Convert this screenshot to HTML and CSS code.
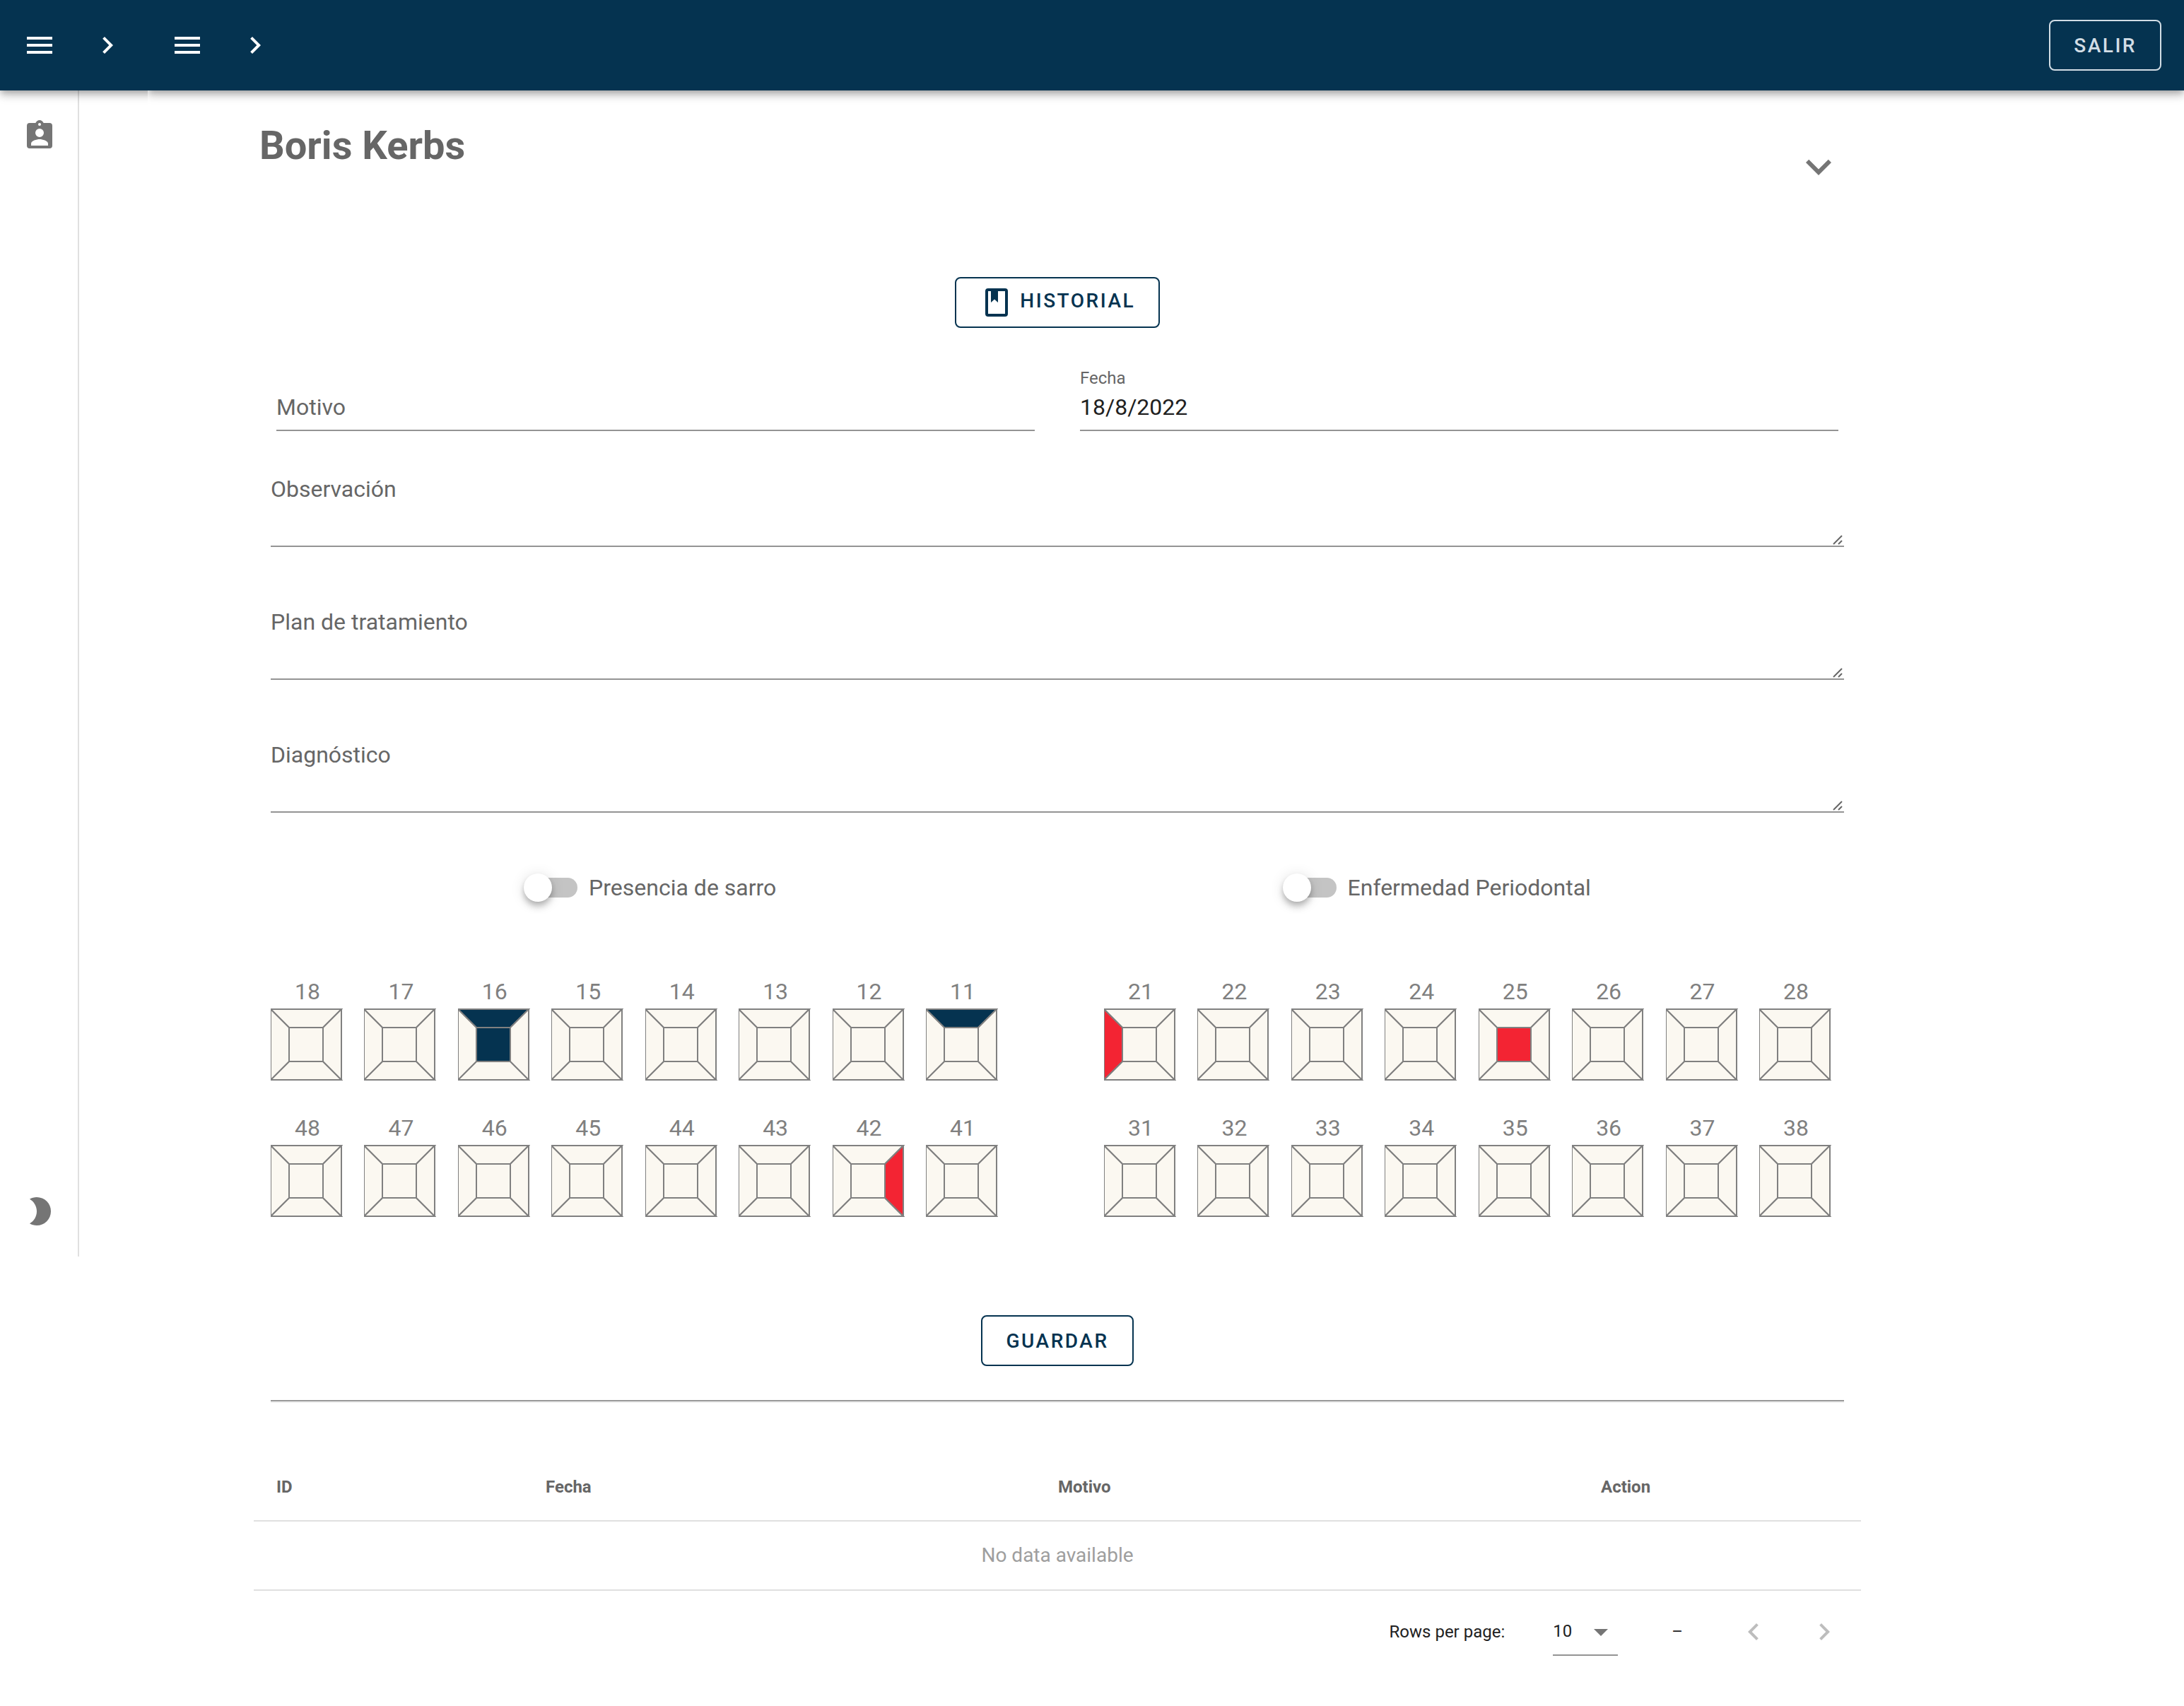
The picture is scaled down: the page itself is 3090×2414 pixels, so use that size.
FILE: index.html
```html
<!DOCTYPE html>
<html lang="es">
<head>
<meta charset="utf-8">
<meta name="viewport" content="width=device-width, initial-scale=1">
<title>Boris Kerbs</title>
<link rel="stylesheet" href="styles.css">
</head>
<body>
<svg class="sprite" width="0" height="0" aria-hidden="true">
  <symbol id="menu" viewBox="0 0 24 24"><path d="M3 6h18v2H3V6m0 5h18v2H3v-2m0 5h18v2H3v-2z"/></symbol>
  <symbol id="chevron-right" viewBox="0 0 24 24"><path d="M8.59 16.58L13.17 12 8.59 7.41 10 6l6 6-6 6-1.41-1.42z"/></symbol>
  <symbol id="chevron-left" viewBox="0 0 24 24"><path d="M15.41 16.58L10.83 12l4.58-4.59L14 6l-6 6 6 6 1.41-1.42z"/></symbol>
  <symbol id="chevron-down" viewBox="0 0 24 24"><path d="M7.41 8.58L12 13.17l4.59-4.59L18 10l-6 6-6-6 1.41-1.42z"/></symbol>
  <symbol id="grip" viewBox="0 0 14 14"><path d="M1 13L13 1M8 13l5-5" fill="none" stroke="#666" stroke-width="2"/></symbol>
  <symbol id="tooth" viewBox="0 -1 102 102">
    <g stroke="#808080" stroke-width="2">
      <polygon class="face-top" points="0,0 100,0 74,26 26,26"/>
      <polygon class="face-bottom" points="26,74 74,74 100,100 0,100"/>
      <polygon class="face-right" points="74,26 100,0 100,100 74,74"/>
      <polygon class="face-left" points="0,0 26,26 26,74 0,100"/>
      <polygon class="face-center" points="26,26 74,26 74,74 26,74"/>
    </g>
  </symbol>
</svg>

<header class="topbar">
  <div class="bar bar-outer">
    <button class="icon-button" type="button" aria-label="Menú principal"><svg class="icon"><use href="#menu"/></svg></button>
    <button class="icon-button" type="button" aria-label="Expandir menú"><svg class="icon"><use href="#chevron-right"/></svg></button>
  </div>
  <div class="bar bar-inner">
    <button class="icon-button" type="button" aria-label="Menú"><svg class="icon"><use href="#menu"/></svg></button>
    <button class="icon-button" type="button" aria-label="Expandir"><svg class="icon"><use href="#chevron-right"/></svg></button>
    <button class="button button-light" type="button">SALIR</button>
  </div>
</header>

<div class="shell">
  <nav class="sidebar" aria-label="Secciones">
    <a class="icon-button" href="#paciente" aria-label="Pacientes"><svg class="icon" viewBox="0 0 24 24"><path d="M18 19H6v-1.4c0-2 4-3.1 6-3.1s6 1.1 6 3.1V19M12 7a3 3 0 1 1 0 6 3 3 0 0 1 0-6m0-4a1 1 0 1 1 0 2 1 1 0 0 1 0-2m7 0h-4.18C14.4 1.84 13.3 1 12 1s-2.4.84-2.82 2H5a2 2 0 0 0-2 2v14a2 2 0 0 0 2 2h14a2 2 0 0 0 2-2V5a2 2 0 0 0-2-2z" fill-rule="evenodd"/></svg></a>
    <button class="icon-button" type="button" aria-label="Modo oscuro"><svg class="icon" viewBox="0 0 24 24"><path d="M10 2c-1.82 0-3.53.5-5 1.35C8 5.08 10 8.3 10 12s-2 6.92-5 8.65C6.47 21.5 8.18 22 10 22a10 10 0 0 0 0-20z"/></svg></button>
  </nav>

  <main class="content" id="paciente">
    <div class="patient">
      <h1 class="patient-name">Boris Kerbs</h1>
      <button class="icon-button" type="button" aria-label="Mostrar datos"><svg class="icon icon-large"><use href="#chevron-down"/></svg></button>
    </div>

    <button class="button history" type="button"><svg class="icon" viewBox="0 0 24 24"><path d="M18 2a2 2 0 0 1 2 2v16a2 2 0 0 1-2 2H6a2 2 0 0 1-2-2V4a2 2 0 0 1 2-2h12m0 2h-5v8l-2.5-2.25L8 12V4H6v16h12V4z"/></svg> HISTORIAL</button>

    <form class="form">
      <div class="field-row">
        <div class="field field-empty">
          <label for="motivo">Motivo</label>
          <input id="motivo" type="text">
        </div>
        <div class="field">
          <label for="fecha">Fecha</label>
          <input id="fecha" type="text" value="18/8/2022">
        </div>
      </div>

      <div class="areas">
        <div class="area"><label for="observacion">Observación</label><textarea id="observacion"></textarea><svg class="grip"><use href="#grip"/></svg></div>
        <div class="area"><label for="plan">Plan de tratamiento</label><textarea id="plan"></textarea><svg class="grip"><use href="#grip"/></svg></div>
        <div class="area"><label for="diagnostico">Diagnóstico</label><textarea id="diagnostico"></textarea><svg class="grip"><use href="#grip"/></svg></div>
      </div>

      <div class="switches">
        <label class="switch"><input type="checkbox">Presencia de sarro</label>
        <label class="switch"><input type="checkbox">Enfermedad Periodontal</label>
      </div>

      <div class="odontogram">
        <div class="quadrant">
          <div class="tooth"><span>18</span><svg><use href="#tooth"/></svg></div>
          <div class="tooth"><span>17</span><svg><use href="#tooth"/></svg></div>
          <div class="tooth done-top done-center"><span>16</span><svg><use href="#tooth"/></svg></div>
          <div class="tooth"><span>15</span><svg><use href="#tooth"/></svg></div>
          <div class="tooth"><span>14</span><svg><use href="#tooth"/></svg></div>
          <div class="tooth"><span>13</span><svg><use href="#tooth"/></svg></div>
          <div class="tooth"><span>12</span><svg><use href="#tooth"/></svg></div>
          <div class="tooth done-top"><span>11</span><svg><use href="#tooth"/></svg></div>
        </div>
        <div class="quadrant">
          <div class="tooth todo-left"><span>21</span><svg><use href="#tooth"/></svg></div>
          <div class="tooth"><span>22</span><svg><use href="#tooth"/></svg></div>
          <div class="tooth"><span>23</span><svg><use href="#tooth"/></svg></div>
          <div class="tooth"><span>24</span><svg><use href="#tooth"/></svg></div>
          <div class="tooth todo-center"><span>25</span><svg><use href="#tooth"/></svg></div>
          <div class="tooth"><span>26</span><svg><use href="#tooth"/></svg></div>
          <div class="tooth"><span>27</span><svg><use href="#tooth"/></svg></div>
          <div class="tooth"><span>28</span><svg><use href="#tooth"/></svg></div>
        </div>
        <div class="quadrant">
          <div class="tooth"><span>48</span><svg><use href="#tooth"/></svg></div>
          <div class="tooth"><span>47</span><svg><use href="#tooth"/></svg></div>
          <div class="tooth"><span>46</span><svg><use href="#tooth"/></svg></div>
          <div class="tooth"><span>45</span><svg><use href="#tooth"/></svg></div>
          <div class="tooth"><span>44</span><svg><use href="#tooth"/></svg></div>
          <div class="tooth"><span>43</span><svg><use href="#tooth"/></svg></div>
          <div class="tooth todo-right"><span>42</span><svg><use href="#tooth"/></svg></div>
          <div class="tooth"><span>41</span><svg><use href="#tooth"/></svg></div>
        </div>
        <div class="quadrant">
          <div class="tooth"><span>31</span><svg><use href="#tooth"/></svg></div>
          <div class="tooth"><span>32</span><svg><use href="#tooth"/></svg></div>
          <div class="tooth"><span>33</span><svg><use href="#tooth"/></svg></div>
          <div class="tooth"><span>34</span><svg><use href="#tooth"/></svg></div>
          <div class="tooth"><span>35</span><svg><use href="#tooth"/></svg></div>
          <div class="tooth"><span>36</span><svg><use href="#tooth"/></svg></div>
          <div class="tooth"><span>37</span><svg><use href="#tooth"/></svg></div>
          <div class="tooth"><span>38</span><svg><use href="#tooth"/></svg></div>
        </div>
      </div>

      <button class="button save" type="button">GUARDAR</button>
      <hr class="divider">
    </form>

    <table class="records">
      <colgroup><col class="col-id"><col class="col-date"><col><col class="col-action"></colgroup>
      <thead><tr><th scope="col">ID</th><th scope="col">Fecha</th><th scope="col">Motivo</th><th scope="col">Action</th></tr></thead>
      <tbody><tr><td class="empty" colspan="4">No data available</td></tr></tbody>
    </table>

    <div class="pager">
      <label for="rows">Rows per page:</label>
      <div class="select">
        <select id="rows"><option>10</option></select>
        <svg class="icon select-arrow" viewBox="0 0 24 24" aria-hidden="true"><path d="M7 10l5 5 5-5H7z"/></svg>
      </div>
      <span class="range">–</span>
      <div class="pager-buttons">
        <button class="icon-button" type="button" disabled aria-label="Página anterior"><svg class="icon"><use href="#chevron-left"/></svg></button>
        <button class="icon-button" type="button" disabled aria-label="Página siguiente"><svg class="icon"><use href="#chevron-right"/></svg></button>
      </div>
    </div>
  </main>
</div>
</body>
</html>
```
FILE: styles.css
```css
:root {
  --navy: #053350;
  --red: #f32433;
  --enamel: #fbf8f1;
  --text: #212121;
  --muted: #666;
  --icon: #757575;
  --line: #949494;
  --rule: #e0e0e0;
}

*, *::before, *::after { box-sizing: border-box; }

body {
  margin: 0;
  background: #fff;
  color: var(--text);
  font-family: Roboto, "Liberation Sans", sans-serif;
  font-size: 32px;
}

button, input, textarea, select { font: inherit; }

.sprite { position: absolute; }

.icon { display: block; width: 48px; height: 48px; fill: currentColor; }
.icon-large { width: 72px; height: 72px; }

.icon-button {
  display: block;
  padding: 0;
  border: 0;
  background: none;
  color: var(--icon);
}
.icon-button:disabled { color: #bdbdbd; }

.button {
  height: 72px;
  padding: 0 33px;
  border: 2px solid var(--navy);
  border-radius: 8px;
  background: none;
  color: var(--navy);
  font-size: 28px;
  font-weight: 500;
  letter-spacing: 0.09em;
}
.button .icon { display: inline-block; vertical-align: middle; }
.button-light { margin-left: auto; border-color: #d2dde5; color: #d2dde5; }

/* Top bars */
.topbar { position: relative; z-index: 1; display: flex; }
.bar {
  display: flex;
  align-items: center;
  gap: 48px;
  height: 128px;
  padding: 0 32px;
  clip-path: inset(0 0 -40px 0);
}
.bar .icon-button { color: #fff; }
.bar-outer { position: relative; width: 209px; }
.bar-outer::before {
  content: "";
  position: absolute;
  z-index: -1;
  top: 0;
  left: 0;
  width: 150%;
  height: 100%;
}
.bar-inner { flex: 1; }
.bar-outer::before, .bar-inner {
  background: var(--navy);
  box-shadow: 0 4px 8px -2px rgba(0, 0, 0, .2), 0 8px 10px 0 rgba(0, 0, 0, .14), 0 2px 20px 0 rgba(0, 0, 0, .12);
}

/* Page frame */
.shell { display: flex; align-items: flex-start; }
.sidebar {
  display: flex;
  flex-direction: column;
  justify-content: space-between;
  width: 112px;
  min-height: 1650px;
  padding: 40px 0 40px 32px;
  border-right: 2px solid var(--rule);
}
.content {
  flex: 1;
  display: flex;
  flex-direction: column;
  min-width: 0;
  padding: 46px 457px 46px 247px;
}

.patient {
  display: flex;
  align-items: center;
  justify-content: space-between;
  min-height: 124px;
  padding: 0 24px 0 8px;
}
.patient-name {
  align-self: flex-start;
  margin: 0;
  color: var(--muted);
  font-size: 56px;
  line-height: 64px;
}
.history { align-self: center; margin-top: 94px; }

/* Form */
.form { display: flex; flex-direction: column; padding: 0 24px; }
.form label { color: var(--muted); }
.form input[type="text"], .form textarea {
  display: block;
  width: 100%;
  padding: 0 0 2px;
  border: 0;
  border-bottom: 2px solid var(--line);
  border-radius: 0;
  background: none;
  color: var(--text);
  outline: 0;
}
.field-row {
  display: grid;
  grid-template-columns: 1fr 1fr;
  align-items: end;
  gap: 64px;
  margin-top: 60px;
  padding: 0 8px;
}
.field { position: relative; }
.field label { display: block; font-size: 24px; line-height: 22px; }
.form .field input { height: 64px; }
.field-empty label {
  position: absolute;
  bottom: 4px;
  left: 0;
  font-size: 32px;
  line-height: 60px;
}

.areas { display: grid; gap: 74px; margin-top: 50px; }
.area { position: relative; }
.area label { position: absolute; top: 0; left: 0; line-height: 64px; }
.form .area textarea { height: 114px; resize: none; }
.grip { position: absolute; right: 2px; bottom: 3px; width: 14px; height: 14px; }

.switches { display: flex; justify-content: space-around; margin-top: 82px; }
.switch { display: flex; align-items: center; gap: 16px; line-height: 48px; }
.switch input {
  position: relative;
  width: 76px;
  height: 40px;
  margin: 0;
  appearance: none;
}
.switch input::before, .switch input::after { content: ""; position: absolute; }
.switch input::before {
  inset: 6px 0 6px 4px;
  border-radius: 14px;
  background: #c4c4c4;
}
.switch input::after {
  top: 0;
  left: 0;
  width: 40px;
  height: 40px;
  border-radius: 50%;
  background: #fff;
  box-shadow: 0 4px 8px -2px rgba(0, 0, 0, .2), 0 8px 10px 0 rgba(0, 0, 0, .14), 0 2px 20px 0 rgba(0, 0, 0, .12);
}
.switch input:checked::after { left: 36px; }

/* Tooth chart */
.odontogram {
  display: grid;
  grid-template-columns: 1fr 1fr;
  gap: 47px 150px;
  margin-top: 103px;
  padding-right: 18px;
}
.quadrant { display: flex; justify-content: space-between; }
.tooth { display: grid; gap: 4px; justify-items: center; color: #808080; }
.tooth span { padding-left: 2px; line-height: 40px; }
.tooth svg { display: block; width: 102px; height: 102px; }
.face-top { fill: var(--top, var(--enamel)); }
.face-bottom { fill: var(--bottom, var(--enamel)); }
.face-left { fill: var(--left, var(--enamel)); }
.face-right { fill: var(--right, var(--enamel)); }
.face-center { fill: var(--center, var(--enamel)); }
.done-top { --top: var(--navy); }
.done-center { --center: var(--navy); }
.todo-left { --left: var(--red); }
.todo-right { --right: var(--red); }
.todo-center { --center: var(--red); }

.save { align-self: center; margin-top: 139px; }
.divider {
  width: 100%;
  margin: 48px 0 0;
  border: 0;
  border-top: 2px solid #9a9a9a;
  border-bottom: 2px solid #eee;
}

/* Records */
.records {
  width: 100%;
  margin-top: 70px;
  border-spacing: 0;
  table-layout: fixed;
}
.col-id { width: 381px; }
.col-date { width: 725px; }
.col-action { width: 400px; }
.records th, .records td {
  height: 98px;
  padding: 0 32px;
  border-bottom: 2px solid var(--rule);
}
.records th { padding-top: 2px; color: var(--muted); font-size: 24px; text-align: left; }
.records .empty { padding-bottom: 2px; color: #9e9e9e; font-size: 28px; text-align: center; }

.pager {
  display: flex;
  align-items: center;
  justify-content: flex-end;
  height: 116px;
  padding-right: 28px;
  font-size: 24px;
}
.select { position: relative; margin: 0 76px 0 68px; }
.select select {
  display: block;
  width: 92px;
  height: 68px;
  padding: 0;
  border: 0;
  border-bottom: 2px solid var(--line);
  border-radius: 0;
  background: none;
  color: var(--text);
  appearance: none;
}
.select-arrow {
  position: absolute;
  top: 10px;
  right: 0;
  color: var(--icon);
  pointer-events: none;
}
.pager-buttons { display: flex; gap: 52px; margin-left: 76px; }
```
